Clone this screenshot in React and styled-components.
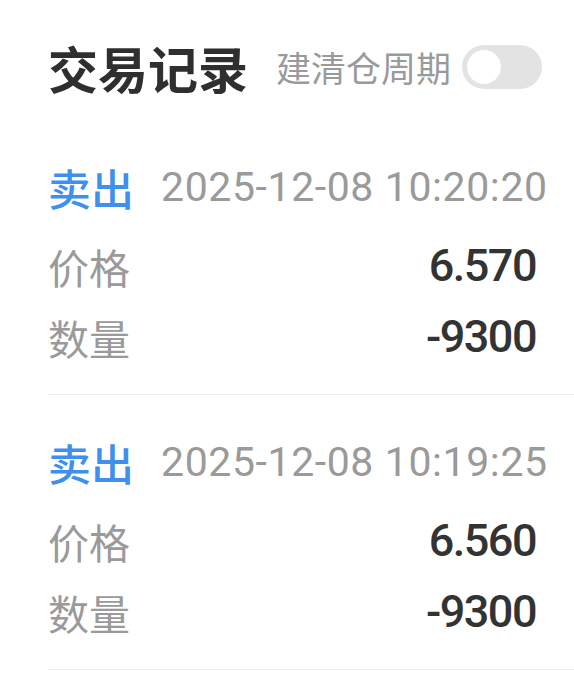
import React from "react";
import styled, { createGlobalStyle } from "styled-components";

const Global = createGlobalStyle`
  html, body { margin: 0; padding: 0; background: #ffffff; }
  body { font-family: "Noto Sans CJK SC", "Noto Sans", sans-serif; }
`;

const Page = styled.div`
  width: 574px;
  background: #fff;
`;

const Header = styled.div`
  display: flex;
  align-items: center;
  padding: 43px 0 29px 48px;
  height: 48px;
`;

const Title = styled.h1`
  margin: 0;
  font-family: "Noto Sans CJK SC", sans-serif;
  font-weight: 700;
  font-size: 50px;
  line-height: 48px;
  color: #2f2f2f;
`;

const CycleLabel = styled.span`
  margin-left: 28px;
  font-family: "Noto Sans CJK SC", sans-serif;
  font-size: 35px;
  line-height: 48px;
  color: #9a9a9a;
`;

const Toggle = styled.div`
  margin-left: 11px;
  width: 80px;
  height: 44px;
  border-radius: 22px;
  background: #e3e3e3;
  display: flex;
  align-items: center;
  padding-left: 5px;
  box-sizing: border-box;
`;

const Knob = styled.div`
  width: 34px;
  height: 34px;
  border-radius: 50%;
  background: #ffffff;
`;

const Item = styled.div`
  margin-left: 48px;
  padding: 42px 0 22px 0;
  border-bottom: 1px solid #ededed;
`;

const ItemHead = styled.div`
  display: flex;
  align-items: center;
  height: 50px;
  margin-bottom: 18px;
`;

const Side = styled.span`
  font-family: "Noto Sans CJK SC", sans-serif;
  font-weight: 500;
  font-size: 43px;
  line-height: 50px;
  color: #3f8ff0;
`;

const Time = styled.span`
  margin-left: 27px;
  font-family: Roboto, "Noto Sans", sans-serif;
  font-size: 41px;
  line-height: 50px;
  letter-spacing: 0.6px;
  color: #9a9a9a;
`;

const Row = styled.div`
  display: flex;
  align-items: center;
  justify-content: space-between;
  height: 71px;
  padding-right: 38px;
`;

const Label = styled.span`
  font-family: "Noto Sans CJK SC", sans-serif;
  font-size: 41px;
  line-height: 50px;
  color: #9a9a9a;
`;

const Value = styled.span`
  font-family: Roboto, "Noto Sans", sans-serif;
  font-weight: 500;
  font-size: 45px;
  line-height: 50px;
  letter-spacing: -1.5px;
  color: #333333;
`;

const records = [
  { side: "卖出", time: "2025-12-08 10:20:20", price: "6.570", qty: "-9300" },
  { side: "卖出", time: "2025-12-08 10:19:25", price: "6.560", qty: "-9300" },
];

export default function App() {
  return (
    <Page>
      <Global />
      <Header>
        <Title>交易记录</Title>
        <CycleLabel>建清仓周期</CycleLabel>
        <Toggle>
          <Knob />
        </Toggle>
      </Header>
      {records.map((r, i) => (
        <Item key={i}>
          <ItemHead>
            <Side>{r.side}</Side>
            <Time>{r.time}</Time>
          </ItemHead>
          <Row>
            <Label>价格</Label>
            <Value>{r.price}</Value>
          </Row>
          <Row>
            <Label>数量</Label>
            <Value>{r.qty}</Value>
          </Row>
        </Item>
      ))}
    </Page>
  );
}
